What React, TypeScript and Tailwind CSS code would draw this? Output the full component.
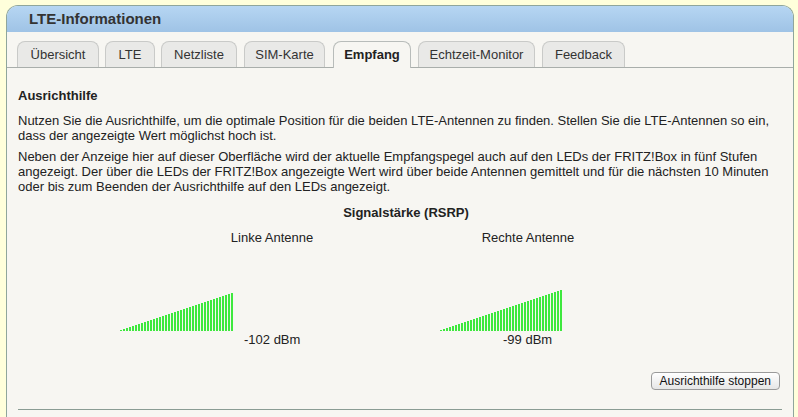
import React from "react";

const tabs = [
  { label: "Übersicht", w: 82, ml: 0 },
  { label: "LTE", w: 50, ml: 6 },
  { label: "Netzliste", w: 76, ml: 6 },
  { label: "SIM-Karte", w: 81, ml: 7 },
  { label: "Empfang", w: 78, ml: 8, active: true },
  { label: "Echtzeit-Monitor", w: 117, ml: 7 },
  { label: "Feedback", w: 83, ml: 7 },
];

function Bars({ count }: { count: number }) {
  return (
    <div className="flex items-end gap-[1px] h-[42px]">
      {Array.from({ length: count }).map((_, i) => (
        <div
          key={i}
          className="w-[2px] bg-[#3ee83e]"
          style={{ height: `${i + 1}px` }}
        />
      ))}
    </div>
  );
}

export default function App() {
  return (
    <div
      className="w-[798px] h-[417px] overflow-hidden bg-[#ffffdb] pt-[5px] pl-[6px]"
      style={{ fontFamily: '"Liberation Sans", Arial, sans-serif' }}
    >
      <div className="w-[788px] h-[420px] border-l border-r border-t border-[#8fa69c] rounded-t-[12px] overflow-hidden bg-[#f7f6f2]">
        <div className="h-[26px] bg-gradient-to-b from-[#b6d6f3] to-[#9fc3e6] flex items-center pl-[22px] text-[15px] font-bold text-[#333]">
          LTE-Informationen
        </div>
        <div className="flex items-end pl-[10px] pt-[9px] border-b border-[#a9aeab] h-[36px]">
          {tabs.map((t) => (
            <div
              key={t.label}
              className={
                t.active
                  ? "h-[27px] -mb-[1px] bg-[#f7f6f2] border border-b-0 border-[#b8bcba] rounded-t-[8px] flex items-center justify-center text-[13px] font-bold text-[#222]"
                  : "h-[26px] bg-[#e9e9e7] border border-b-0 border-[#c9cac8] rounded-t-[8px] flex items-center justify-center text-[13px] text-[#333]"
              }
              style={{ width: t.w, marginLeft: t.ml }}
            >
              {t.label}
            </div>
          ))}
        </div>
        <div className="px-[11px] text-[13px] leading-[15px] text-[#222]">
          <div className="font-bold mt-[20px]">Ausrichthilfe</div>
          <p className="mt-[10px]">
            Nutzen Sie die Ausrichthilfe, um die optimale Position für die beiden LTE-Antennen zu finden. Stellen Sie die LTE-Antennen so ein, dass der angezeigte Wert möglichst hoch ist.
          </p>
          <p className="mt-[6px] pr-[4px]">
            Neben der Anzeige hier auf dieser Oberfläche wird der aktuelle Empfangspegel auch auf den LEDs der FRITZ!Box in fünf Stufen angezeigt. Der über die LEDs der FRITZ!Box angezeigte Wert wird über beide Antennen gemittelt und für die nächsten 10 Minuten oder bis zum Beenden der Ausrichthilfe auf den LEDs angezeigt.
          </p>
          <div className="mt-[11px] text-center font-bold pl-[12px]">Signalstärke (RSRP)</div>
          <div className="flex mt-[10px] pl-[126px]">
            <div className="w-[256px] text-center">Linke Antenne</div>
            <div className="w-[256px] text-center">Rechte Antenne</div>
          </div>
          <div className="flex items-start mt-[44px] pl-[102px]">
            <Bars count={38} />
            <div className="ml-[11px] mt-[43px] w-[196px]">-102 dBm</div>
            <div className="relative">
              <Bars count={41} />
              <div className="absolute left-[63px] top-[43px]">-99 dBm</div>
            </div>
          </div>
          <div className="flex justify-end mt-[25px] pr-[2px]">
            <button className="h-[18px] px-[8px] text-[12px] leading-[16px] text-[#111] bg-gradient-to-b from-[#ffffff] to-[#e6e6e6] border border-[#9a9a9a] rounded-[4px]">
              Ausrichthilfe stoppen
            </button>
          </div>
          <div className="mt-[19px] border-t border-[#8a9c94]" />
        </div>
      </div>
    </div>
  );
}
